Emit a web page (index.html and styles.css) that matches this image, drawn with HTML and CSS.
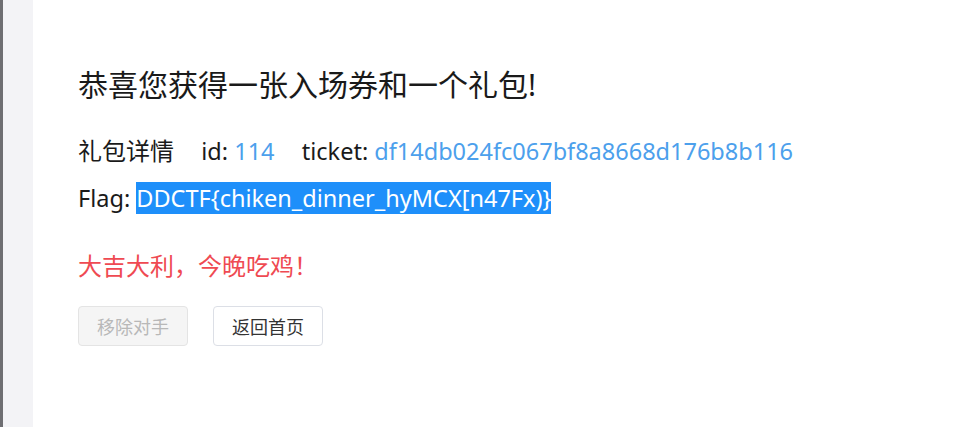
FILE: index.html
```html
<!doctype html>
<html>
  <head>
    <meta charset="utf-8">
    <title>礼包详情</title>
    <link rel="stylesheet" href="styles.css">
  </head>
  <body>
    <div class="page">
      <div class="edge"></div>
      <div class="rail"></div>

      <section class="main">
        <h1>恭喜您获得一张入场券和一个礼包!</h1>

        <p class="detail">
          礼包详情
          <span class="field">id: <span class="value">114</span></span>
          <span class="field">ticket: <span class="value">df14db024fc067bf8a8668d176b8b116</span></span>
        </p>

        <p class="flag">Flag: <span class="picked">DDCTF{chiken_dinner_hyMCX[n47Fx)}</span></p>

        <p class="lucky">大吉大利，今晚吃鸡！</p>

        <div class="actions">
          <button class="btn" disabled>移除对手</button>
          <button class="btn">返回首页</button>
        </div>
      </section>
    </div>
  </body>
</html>
```

FILE: styles.css
```css
html, body {
  margin: 0;
  padding: 0;
  height: 100%;
  background: #ffffff;
  font-family: "Noto Sans", "Noto Sans CJK SC", sans-serif;
  color: #1a1a1a;
}

.page {
  display: flex;
  height: 100%;
}

.edge {
  width: 3px;
  background: #6e6e72;
}

.rail {
  width: 30px;
  background: #f3f3f6;
}

.main {
  flex: 1;
  padding: 62px 45px 0 45px;
}

h1 {
  font-size: 30px;
  font-weight: normal;
  line-height: 46px;
  margin: 0 0 25px 0;
}

p {
  margin: 0;
  font-size: 24px;
  line-height: 36px;
}

.detail {
  margin-bottom: 11px;
}

.field {
  margin-left: 21px;
  font-size: 23.5px;
}

.value {
  color: #4ca0ec;
}

.flag {
  font-size: 23.5px;
  margin-bottom: 32px;
}

.picked {
  background: #1e8ffa;
  color: #ffffff;
}

.lucky {
  color: #ef4a52;
  margin-bottom: 22px;
}

.actions {
  display: flex;
  gap: 25px;
}

.btn {
  width: 110px;
  height: 40px;
  padding: 0;
  font-family: "Noto Sans CJK SC", sans-serif;
  font-size: 18px;
  color: #333333;
  background: #ffffff;
  border: 1px solid #dcdfe6;
  border-radius: 4px;
}

.btn:disabled {
  color: #b8b8b8;
  background: #f5f5f5;
  border-color: #e4e4e4;
}
```
